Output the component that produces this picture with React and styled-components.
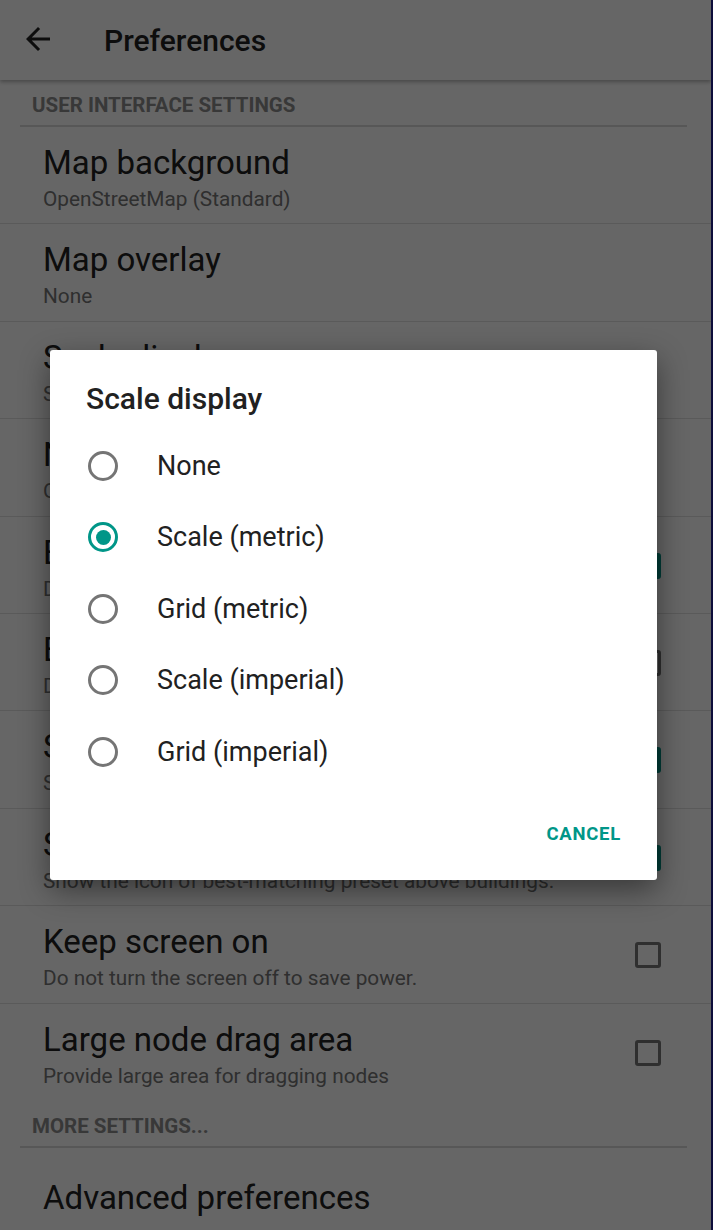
import React from 'react';
import styled, { createGlobalStyle } from 'styled-components';

const GlobalStyle = createGlobalStyle`
	html, body {
		margin: 0;
		padding: 0;
		background: #0d0d3b;
	}
	body {
		font-family: Roboto, "Noto Sans", "Liberation Sans", sans-serif;
	}
`;

const TEAL = '#009688';

const preferences = [
	{ type: 'category', title: 'User interface settings', top: 14 },
	{ title: 'Map background', summary: 'OpenStreetMap (Standard)' },
	{ title: 'Map overlay', summary: 'None' },
	{ title: 'Scale display', summary: 'Scale (metric)' },
	{ title: 'Node icons', summary: 'On' },
	{ title: 'Enable light theme', summary: 'Display the UI in a light theme', check: true },
	{ title: 'Enable split action bar', summary: 'Display actions at the bottom', check: false },
	{ title: 'Show icons', summary: 'Show icons for nodes with presets', check: true },
	{ title: 'Show icons on buildings', summary: 'Show the icon of best-matching preset above buildings.', check: true },
	{ title: 'Keep screen on', summary: 'Do not turn the screen off to save power.', check: false },
	{ title: 'Large node drag area', summary: 'Provide large area for dragging nodes', check: false, last: true },
	{ type: 'category', title: 'More settings...', top: 15 },
	{ title: 'Advanced preferences' },
];

const scaleOptions = ['None', 'Scale (metric)', 'Grid (metric)', 'Scale (imperial)', 'Grid (imperial)'];

const Page = styled.div`
	position: relative;
	width: 711px;
	height: 1230px;
	overflow: hidden;
	background: #ffffff;
`;

const Toolbar = styled.div`
	position: relative;
	z-index: 1;
	display: flex;
	align-items: center;
	height: 80px;
	padding-left: 20px;
	background: #ffffff;
	box-shadow: 0 2px 4px rgba(0, 0, 0, 0.3);
`;

const BackButton = styled.svg`
	width: 36px;
	height: 36px;
	fill: #212121;
	margin-top: -2px;
`;

const ToolbarTitle = styled.h1`
	margin: 0 0 0 48px;
	font-size: 30px;
	font-weight: 500;
	color: #212121;
`;

const Category = styled.div`
	margin: 0 24px 0 20px;
	padding: ${(p) => p.$top}px 0 9px 12px;
	border-bottom: 2px solid #dadada;
	font-size: 20.5px;
	line-height: 22px;
	font-weight: 700;
	text-transform: uppercase;
	color: #8c8c8c;
`;

const Item = styled.div`
	display: flex;
	align-items: center;
	padding: 17px 50px 12.4px 43px;
	border-bottom: ${(p) => (p.$last ? 'none' : '1px solid #e2e2e2')};
`;

const ItemText = styled.div`
	flex: 1;
	min-width: 0;
	min-height: 67px;
	display: flex;
	flex-direction: column;
	justify-content: center;
`;

const ItemTitle = styled.div`
	font-size: 33px;
	line-height: 38px;
	color: #212121;
	white-space: nowrap;
`;

const ItemSummary = styled.div`
	margin-top: 5px;
	font-size: 20.8px;
	line-height: 24px;
	color: #757575;
	white-space: nowrap;
`;

const Checkbox = styled.div`
	box-sizing: border-box;
	width: 26px;
	height: 26px;
	margin-bottom: 3px;
	border-radius: 3px;
	border: 3px solid ${(p) => (p.$checked ? TEAL : '#757575')};
	background: ${(p) => (p.$checked ? TEAL : 'transparent')};
`;

const Scrim = styled.div`
	position: absolute;
	inset: 0;
	z-index: 2;
	display: flex;
	align-items: center;
	justify-content: center;
	padding-right: 4px;
	background: rgba(0, 0, 0, 0.6);
`;

const Dialog = styled.div`
	width: 607px;
	height: 530px;
	box-sizing: border-box;
	display: flex;
	flex-direction: column;
	background: #ffffff;
	border-radius: 3px;
	box-shadow: 0 10px 30px rgba(0, 0, 0, 0.45);
`;

const DialogTitle = styled.div`
	padding: 32px 36px 0;
	font-size: 30px;
	line-height: 34px;
	font-weight: 500;
	color: #212121;
`;

const OptionList = styled.div`
	margin-top: 14px;
	display: flex;
	flex-direction: column;
`;

const Option = styled.div`
	display: flex;
	align-items: center;
	height: 71.5px;
	padding-left: 38px;
	gap: 39px;
	font-size: 27px;
	color: #212121;
`;

const Radio = styled.div`
	box-sizing: border-box;
	width: 30px;
	height: 30px;
	border-radius: 50%;
	border: 3px solid ${(p) => (p.$checked ? TEAL : '#757575')};
	display: flex;
	align-items: center;
	justify-content: center;

	&::after {
		content: '';
		display: ${(p) => (p.$checked ? 'block' : 'none')};
		width: 15px;
		height: 15px;
		border-radius: 50%;
		background: ${TEAL};
	}
`;

const Actions = styled.div`
	flex: 1;
	display: flex;
	align-items: center;
	justify-content: flex-end;
	padding: 0 36px 0 0;
`;

const TextButton = styled.button`
	border: none;
	background: none;
	padding: 0;
	font-family: inherit;
	font-size: 18.5px;
	font-weight: 700;
	letter-spacing: 0.04em;
	color: ${TEAL};
	cursor: pointer;
`;

const App = () => {
	return (
		<>
			<GlobalStyle />
			<Page>
				<Toolbar>
					<BackButton viewBox="0 0 24 24">
						<path d="M20 11H7.83l5.59-5.59L12 4l-8 8 8 8 1.41-1.41L7.83 13H20v-2z" />
					</BackButton>
					<ToolbarTitle>Preferences</ToolbarTitle>
				</Toolbar>
				{preferences.map((pref) =>
					pref.type === 'category' ? (
						<Category key={pref.title} $top={pref.top}>
							{pref.title}
						</Category>
					) : (
						<Item key={pref.title} $last={pref.last}>
							<ItemText>
								<ItemTitle>{pref.title}</ItemTitle>
								{pref.summary && <ItemSummary>{pref.summary}</ItemSummary>}
							</ItemText>
							{pref.check !== undefined && <Checkbox $checked={pref.check} />}
						</Item>
					)
				)}
				<Scrim>
					<Dialog>
						<DialogTitle>Scale display</DialogTitle>
						<OptionList>
							{scaleOptions.map((option) => (
								<Option key={option}>
									<Radio $checked={option === 'Scale (metric)'} />
									{option}
								</Option>
							))}
						</OptionList>
						<Actions>
							<TextButton>CANCEL</TextButton>
						</Actions>
					</Dialog>
				</Scrim>
			</Page>
		</>
	);
};

export default App;
